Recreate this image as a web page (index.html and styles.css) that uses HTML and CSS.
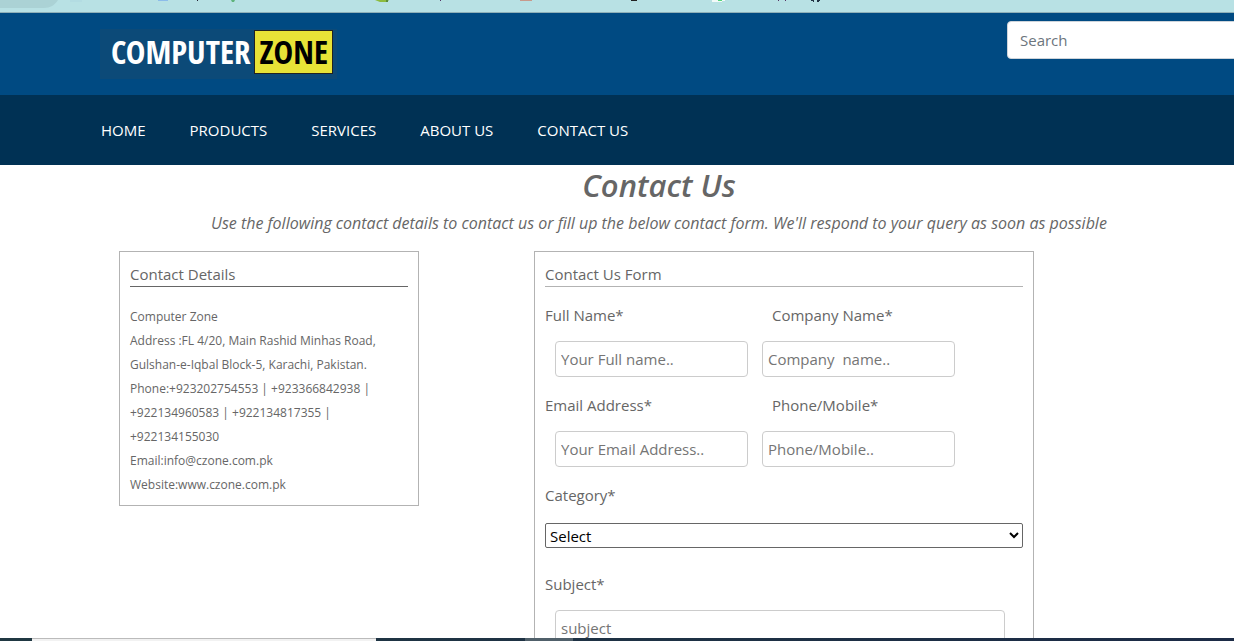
FILE: index.html
```html
<!DOCTYPE html>
<html lang="en">
<head>
<meta charset="utf-8">
<title>Contact Us - Computer Zone</title>
<link rel="stylesheet" href="styles.css">
</head>
<body>
<div class="bookmarks" aria-hidden="true">
  <svg class="bookmark-icons" width="840" height="12" viewBox="0 0 840 12">
    <path d="M0 0H58C55 5 50 8 44 8H0Z" fill="#abd2d5"/>
    <rect x="70" y="0" width="12" height="2" fill="#b3dce2"/>
    <rect x="158" y="0" width="10" height="1" fill="#8cbcea"/>
    <rect x="197" y="0" width="1" height="1" fill="#223"/>
    <path d="M231 0H235L234 2H232Z" fill="#5fb37c"/>
    <path d="M375 0H389L387 2H380Z" fill="#8dbb3f"/>
    <rect x="386" y="0" width="2" height="2" fill="#5b8c3a"/>
    <rect x="440" y="0" width="1" height="1" fill="#536"/>
    <rect x="520" y="0" width="12" height="1" fill="#c79a8c"/>
    <rect x="631" y="0" width="6" height="1" fill="#222"/>
    <path d="M712 0H725V1H722V2H712Z" fill="#f2faf8"/>
    <rect x="718" y="0" width="4" height="1" fill="#58d67c"/>
    <rect x="778" y="0" width="1" height="1" fill="#536"/>
    <rect x="785" y="0" width="1" height="1" fill="#536"/>
    <path d="M811 0H814V2H813V1H811ZM817 0H820V1H819V2H817Z" fill="#234"/>
  </svg>
</div>
<div class="page">
  <header class="header">
    <a class="logo" href="#"><span class="logo-name">COMPUTER</span><span class="logo-tag">ZONE</span></a>
    <input class="search" type="search" placeholder="Search" aria-label="Search">
  </header>
  <nav class="nav">
    <a class="nav-link" href="#">HOME</a>
    <a class="nav-link" href="#">PRODUCTS</a>
    <a class="nav-link" href="#">SERVICES</a>
    <a class="nav-link" href="#">ABOUT US</a>
    <a class="nav-link" href="#">CONTACT US</a>
  </nav>
  <main class="main">
    <h1 class="title">Contact Us</h1>
    <p class="intro">Use the following contact details to contact us or fill up the below contact form. We'll respond to your query as soon as possible</p>
    <div class="columns">
      <section class="card details">
        <h2 class="card-title">Contact Details</h2>
        <address class="address">Computer Zone<br>Address :FL 4/20, Main Rashid Minhas Road,<br>Gulshan-e-Iqbal Block-5, Karachi, Pakistan.<br>Phone:+923202754553 | +923366842938 |<br>+922134960583 | +922134817355 |<br>+922134155030<br>Email:info@czone.com.pk<br>Website:www.czone.com.pk</address>
      </section>
      <form class="card form">
        <h2 class="card-title">Contact Us Form</h2>
        <div class="pair">
          <div class="field">
            <label class="label outdent" for="name">Full Name*</label>
            <input class="input" id="name" type="text" placeholder="Your Full name..">
          </div>
          <div class="field">
            <label class="label indent" for="company">Company Name*</label>
            <input class="input" id="company" type="text" placeholder="Company  name..">
          </div>
          <div class="field">
            <label class="label outdent" for="email">Email Address*</label>
            <input class="input" id="email" type="email" placeholder="Your Email Address..">
          </div>
          <div class="field">
            <label class="label indent" for="phone">Phone/Mobile*</label>
            <input class="input" id="phone" type="tel" placeholder="Phone/Mobile..">
          </div>
        </div>
        <div class="category">
          <label class="label" for="category">Category*</label>
          <select class="select" id="category"><option>Select</option></select>
        </div>
        <div class="subject">
          <label class="label outdent" for="subject">Subject*</label>
          <input class="input" id="subject" type="text" placeholder="subject">
        </div>
      </form>
    </div>
  </main>
</div>
<div class="taskbar" aria-hidden="true">
  <span class="task-search"></span>
  <span class="task-active"></span>
</div>
</body>
</html>
```
FILE: styles.css
```css
* {
  box-sizing: border-box;
}

body {
  margin: 0;
  height: 100vh;
  display: flex;
  flex-direction: column;
  overflow: hidden;
  background: #fff;
  color: #666;
  font: 15px/24px "Open Sans", "Noto Sans", sans-serif;
}

.bookmarks {
  flex: none;
  background: #b8e1e4;
  border-bottom: 1px solid #8fb0b8;
}

.bookmark-icons {
  display: block;
}

.page {
  flex: 1;
  min-height: 0;
  overflow: hidden;
}

.header {
  display: flex;
  justify-content: space-between;
  align-items: flex-start;
  padding: 8px 0 16px 100px;
  background: #004a82;
  overflow: hidden;
}

.logo {
  display: flex;
  align-items: flex-start;
  gap: 4px;
  margin-top: 8px;
  padding: 1px 4px 5px 11px;
  background: #0c4a78;
  color: #fff;
  font: bold 33px/42px "Liberation Sans Narrow", "Open Sans Condensed", "DejaVu Sans Condensed", sans-serif;
  text-decoration: none;
}

.logo-name {
  padding-top: 1px;
}

.logo-tag {
  padding: 0 4px;
  border: 1px solid #222;
  background: #e8e337;
  color: #000;
}

.search {
  width: 240px;
  height: 38px;
  margin-right: -13px;
  padding: 0 12px;
  border: 1px solid #ced4da;
  border-radius: 4px;
  background: #fff;
  font: inherit;
}

.search::placeholder {
  color: #6c757d;
}

.nav {
  display: flex;
  flex-wrap: wrap;
  gap: 44px;
  padding: 23px 101px;
  background: #003154;
}

.nav-link {
  color: #fff;
  text-decoration: none;
}

.main {
  padding-left: 84px;
}

.title {
  margin: 0;
  padding-bottom: 6px;
  font-size: 31px;
  font-weight: 600;
  font-style: italic;
  line-height: 40px;
  text-align: center;
}

.intro {
  margin: 0;
  font-size: 16px;
  font-style: italic;
  text-align: center;
}

.columns {
  display: flex;
  align-items: flex-start;
  gap: 115px;
  padding: 16px 35px 0;
}

.card {
  padding: 10px;
  border: 1px solid #b3b3b3;
}

.details {
  flex: 0 1 300px;
  padding-bottom: 8px;
}

.form {
  flex: 0 1 500px;
}

.card-title {
  margin: 0;
  border-bottom: 1px solid #b3b3b3;
  font-size: 15px;
  font-weight: 400;
}

.details .card-title {
  border-color: #666;
}

.address {
  margin-top: 18px;
  font-size: 12px;
  font-style: normal;
}

.pair {
  display: grid;
  grid-template-columns: 193px 193px;
  gap: 16px 14px;
  margin-top: 16px;
  padding-left: 10px;
}

.field {
  display: flex;
  flex-direction: column;
  gap: 14px;
}

.label {
  display: block;
}

.outdent {
  margin-left: -10px;
}

.indent {
  margin-left: 10px;
}

.input {
  width: 100%;
  height: 36px;
  padding: 0 5px;
  border: 1px solid #ccc;
  border-radius: 4px;
  background: #fff;
  font: inherit;
}

.input::placeholder {
  color: #757575;
}

.category {
  display: flex;
  flex-direction: column;
  gap: 16px;
  margin-top: 16px;
}

.select {
  width: 100%;
  height: 25px;
  padding: 0;
  border: 1px solid #666;
  border-radius: 2px;
  background-color: #fff;
  color: #000;
  font: inherit;
}

.subject {
  display: flex;
  flex-direction: column;
  gap: 14px;
  margin-top: 24px;
  padding: 0 18px 0 10px;
}

.taskbar {
  flex: none;
  display: flex;
  height: 3px;
  padding-left: 32px;
  background: linear-gradient(90deg, #203842, #1c2b46);
}

.task-search {
  width: 344px;
  border-top: 1px solid #bbb;
  background: #f2f2f2;
}

.task-active {
  width: 48px;
  margin-left: 149px;
  background: #50606a;
}
```
